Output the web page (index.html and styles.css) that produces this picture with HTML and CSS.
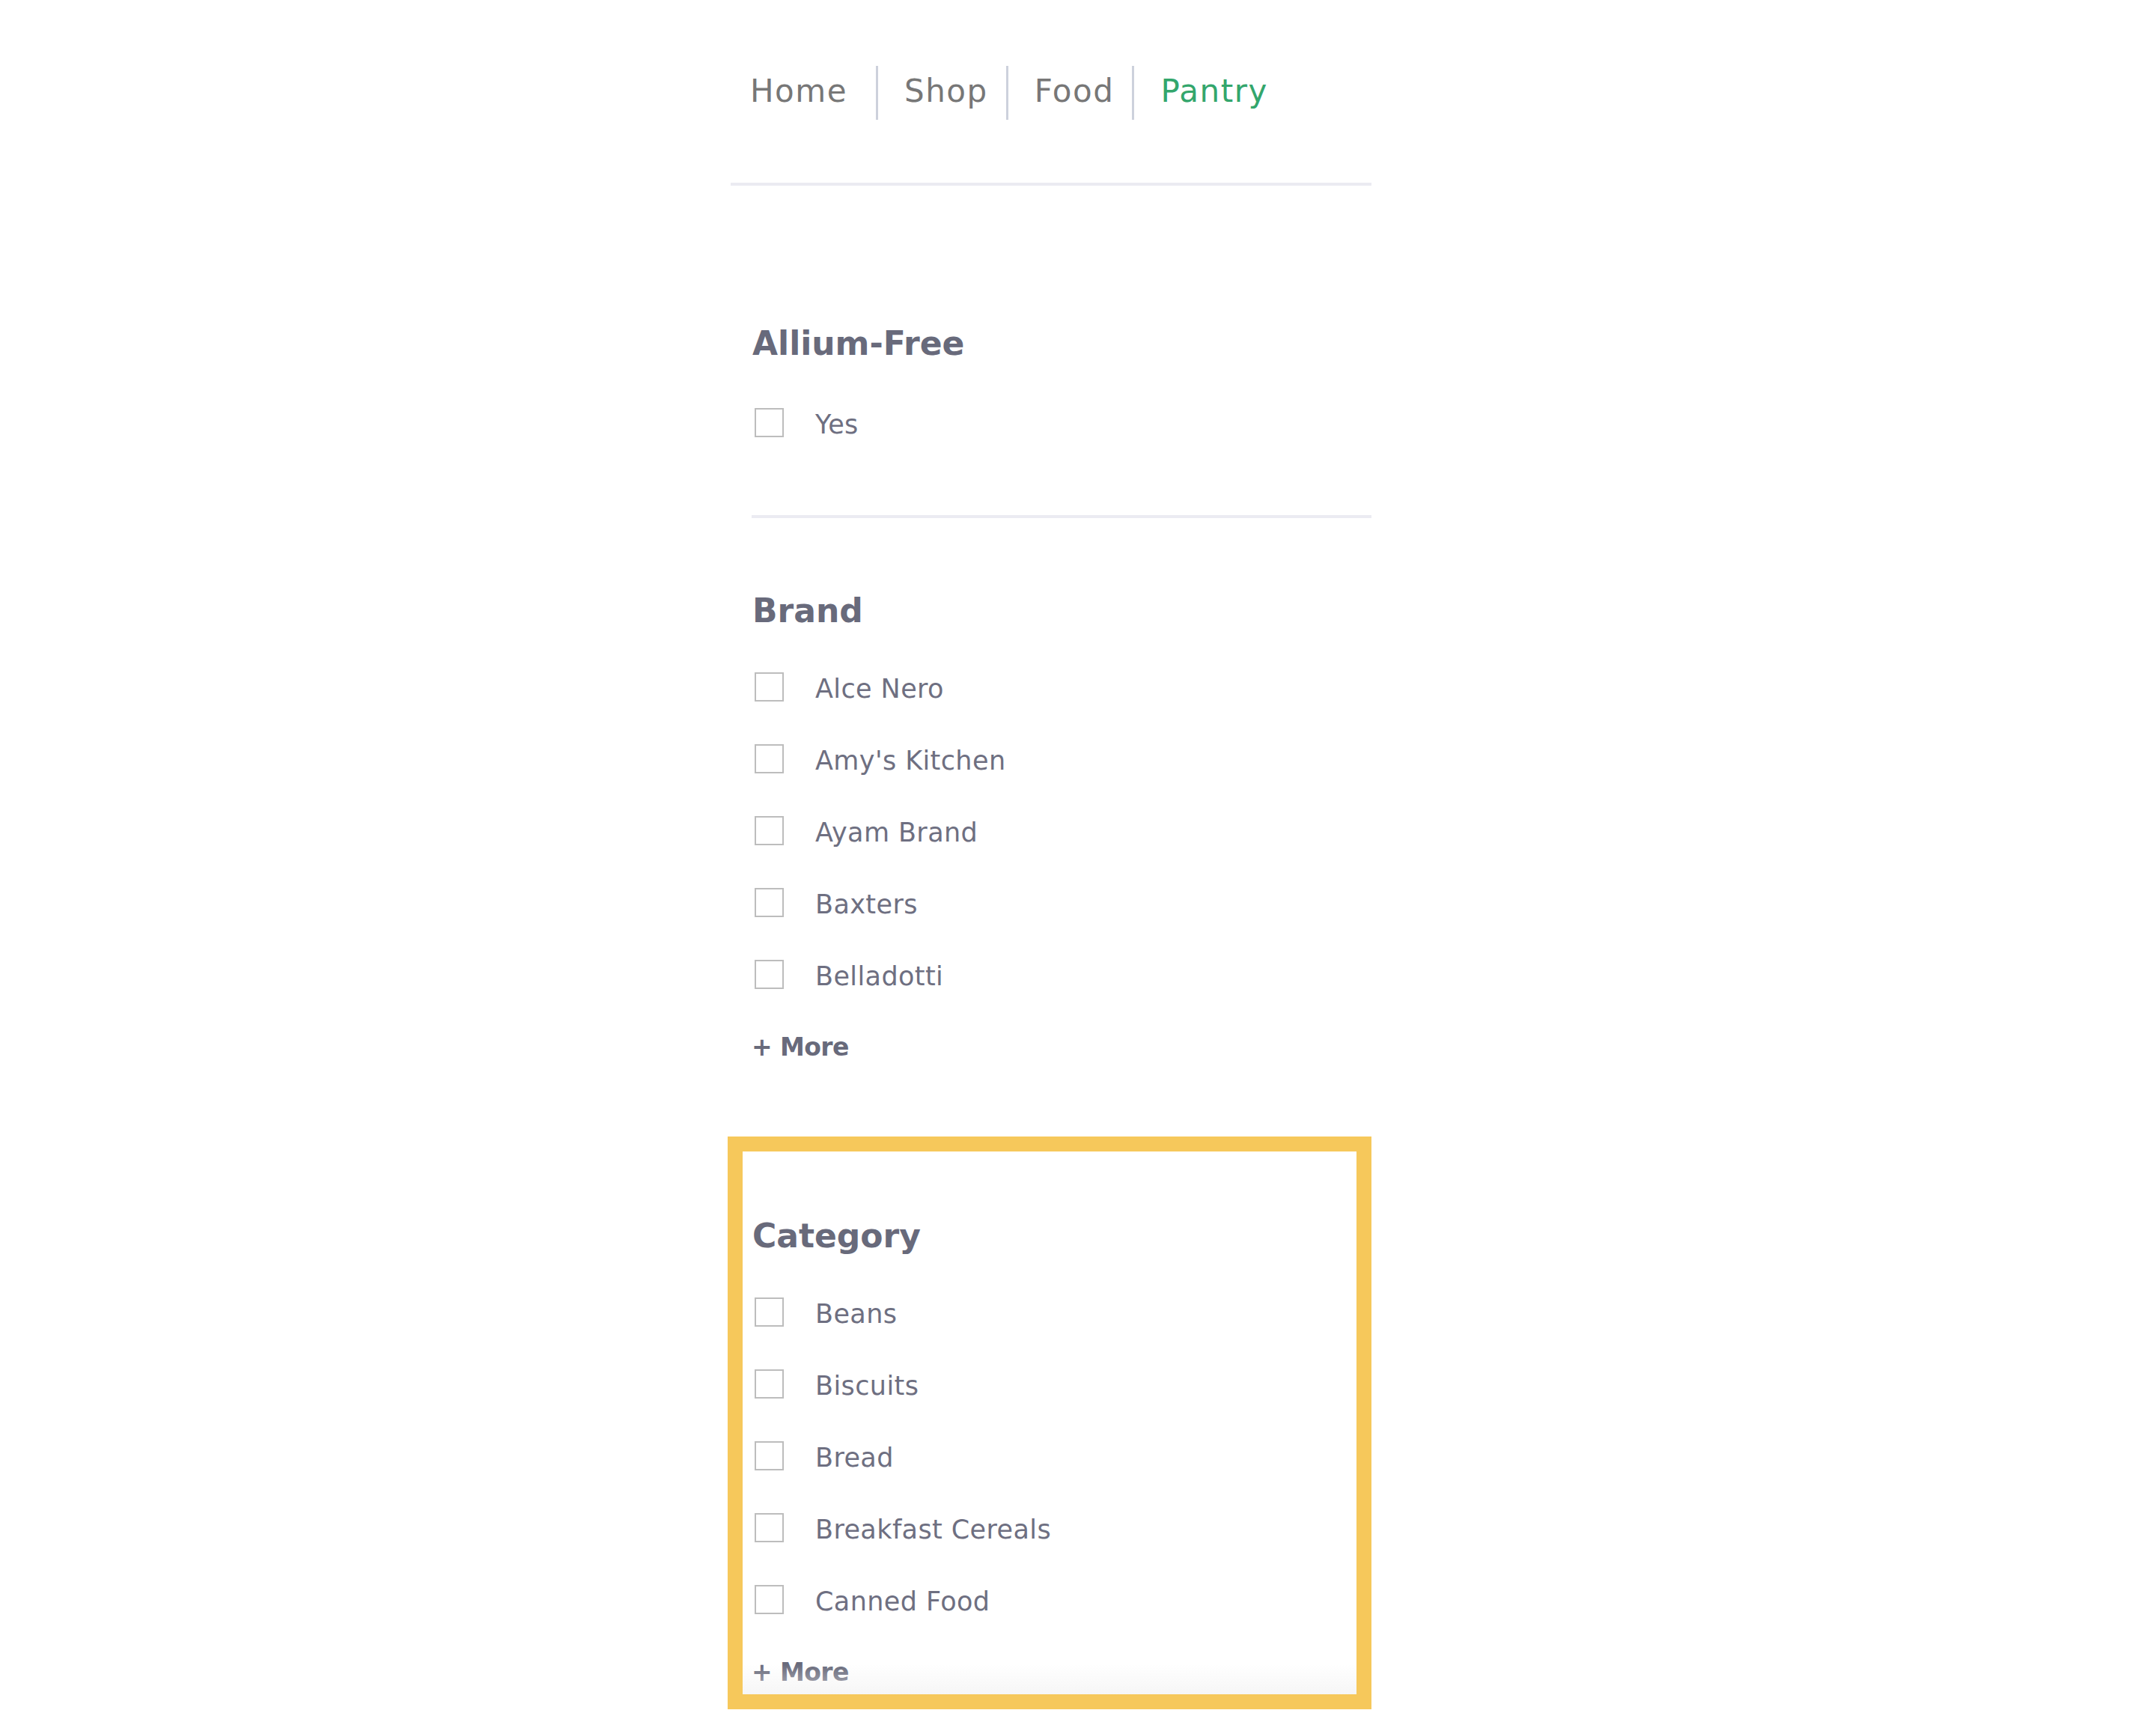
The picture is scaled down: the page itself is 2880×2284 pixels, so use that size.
FILE: index.html
```html
<!DOCTYPE html>
<html lang="en">
<head>
<meta charset="utf-8">
<title>Pantry filters</title>
<link rel="stylesheet" href="styles.css">
</head>
<body>
<aside class="sidebar">
  <nav class="crumbs">
    <ul class="crumb-list">
      <li class="crumb">Home</li>
      <li class="crumb">Shop</li>
      <li class="crumb">Food</li>
      <li class="crumb crumb-active">Pantry</li>
    </ul>
  </nav>

  <section class="filter filter-first">
    <h2 class="filter-title">Allium-Free</h2>
    <ul class="options">
      <li class="option"><span class="box"></span><span class="label">Yes</span></li>
    </ul>
  </section>

  <section class="filter filter-plain">
    <h2 class="filter-title">Brand</h2>
    <ul class="options">
      <li class="option"><span class="box"></span><span class="label">Alce Nero</span></li>
      <li class="option"><span class="box"></span><span class="label">Amy's Kitchen</span></li>
      <li class="option"><span class="box"></span><span class="label">Ayam Brand</span></li>
      <li class="option"><span class="box"></span><span class="label">Baxters</span></li>
      <li class="option"><span class="box"></span><span class="label">Belladotti</span></li>
    </ul>
    <div class="more">+ More</div>
  </section>

  <div class="highlight">
    <section class="filter filter-inner">
      <h2 class="filter-title">Category</h2>
      <ul class="options">
        <li class="option"><span class="box"></span><span class="label">Beans</span></li>
        <li class="option"><span class="box"></span><span class="label">Biscuits</span></li>
        <li class="option"><span class="box"></span><span class="label">Bread</span></li>
        <li class="option"><span class="box"></span><span class="label">Breakfast Cereals</span></li>
        <li class="option"><span class="box"></span><span class="label">Canned Food</span></li>
      </ul>
      <div class="more">+ More</div>
    </section>
  </div>
</aside>
</body>
</html>
```

FILE: styles.css
```css
html, body {
  margin: 0;
  padding: 0;
  background: #ffffff;
}

body {
  font-family: "DejaVu Sans", "Liberation Sans", sans-serif;
  overflow: hidden;
}

ul {
  list-style: none;
  margin: 0;
  padding: 0;
}

.sidebar {
  margin-left: 972px;
  width: 860px;
}

/* breadcrumb nav */
.crumbs {
  margin-left: 4px;
  padding-top: 88px;
  padding-bottom: 84px;
  border-bottom: 4px solid #ebebf2;
}

.crumb-list {
  display: flex;
  padding-left: 26px;
}

.crumb {
  font-size: 42px;
  letter-spacing: 1.5px;
  color: #777777;
  line-height: 68px;
  padding: 0 24px 4px 35px;
  border-left: 3px solid #cdd1dc;
}

.crumb:first-child {
  padding-left: 0;
  padding-right: 38px;
  border-left: none;
}

.crumb-active {
  color: #33a66c;
}

/* filter sections */
.filter {
  margin-left: 32px;
  color: #6c6d7f;
}

.filter-first {
  padding-top: 181px;
  padding-bottom: 76px;
  border-bottom: 4px solid #ebebf2;
}

.filter-first .filter-title {
  margin-bottom: 27px;
}

.filter-plain {
  padding-top: 94px;
  padding-bottom: 94px;
}

.filter-title {
  margin: 0 0 23px;
  padding-left: 1px;
  font-size: 44px;
  font-weight: 700;
  line-height: 60px;
  color: #686a7b;
}

.option {
  display: flex;
  align-items: center;
  height: 96px;
}

.box {
  box-sizing: border-box;
  width: 39px;
  height: 39px;
  margin-left: 4px;
  margin-right: 42px;
  border: 2px solid #bdbdbd;
  background: #ffffff;
}

.label {
  font-size: 35px;
  letter-spacing: 0.4px;
  line-height: 90px;
  padding-top: 6px;
  color: #6e6f81;
}

.more {
  margin-top: 25px;
  font-size: 33px;
  letter-spacing: -0.6px;
  font-weight: 700;
  line-height: 50px;
  color: #686a7b;
}

/* yellow highlight around the category filter */
.highlight {
  position: relative;
  border: 20px solid #f6c85b;
  padding-left: 12px;
  background: #ffffff;
}

.highlight::after {
  content: "";
  position: absolute;
  left: 0;
  right: 0;
  bottom: 0;
  height: 40px;
  background: linear-gradient(to bottom, rgba(245, 245, 245, 0), rgba(240, 240, 240, 0.6));
}

.filter-inner {
  margin-left: 0;
  padding-top: 83px;
  padding-bottom: 4px;
}
```
